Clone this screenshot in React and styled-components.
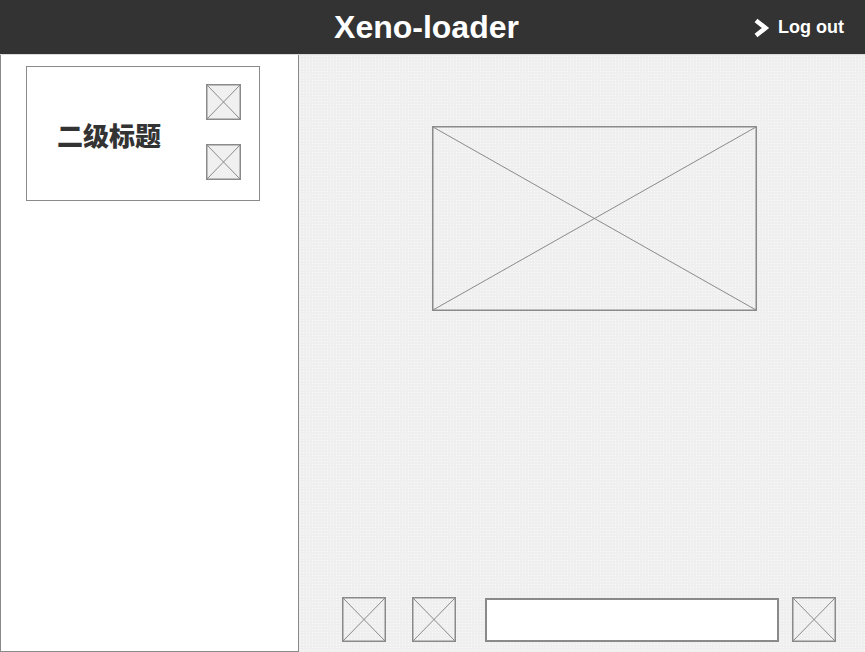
import React from 'react'
import styled, { createGlobalStyle } from 'styled-components'

const GlobalStyle = createGlobalStyle`
    html, body {
        margin: 0;
        padding: 0;
    }
    body {
        font-family: "Liberation Sans", Arial, sans-serif;
        background: #efefef;
    }
`

const Placeholder = ({ width, height, fill = 'none' }) => (
    <svg width={width} height={height} viewBox={`0 0 ${width} ${height}`} style={{ display: 'block' }}>
        <rect x="0.75" y="0.75" width={width - 1.5} height={height - 1.5} fill={fill} stroke="#8a8a8a" strokeWidth="1.5" />
        <line x1="1" y1="1" x2={width - 1} y2={height - 1} stroke="#8a8a8a" strokeWidth="1" />
        <line x1={width - 1} y1="1" x2="1" y2={height - 1} stroke="#8a8a8a" strokeWidth="1" />
    </svg>
)

const App = () => {
    return (
        <Page>
            <GlobalStyle />
            <Header>
                <Title>Xeno-loader</Title>
                <Logout>
                    <svg width="17" height="20" viewBox="0 0 17 20">
                        <path d="M3 2.5 L12.5 10 L3 17.5" fill="none" stroke="#fff" strokeWidth="4.5" strokeLinejoin="miter" />
                    </svg>
                    <span>Log out</span>
                </Logout>
            </Header>
            <Body>
                <Sidebar>
                    <Card>
                        <CardTitle>二级标题</CardTitle>
                        <CardIcons>
                            <Placeholder width={35} height={36} fill="#f0f0f0" />
                            <Placeholder width={35} height={36} fill="#f0f0f0" />
                        </CardIcons>
                    </Card>
                </Sidebar>
                <Main>
                    <Picture>
                        <Placeholder width={325} height={185} />
                    </Picture>
                    <Controls>
                        <Slot $ml={0}><Placeholder width={44} height={45} /></Slot>
                        <Slot $ml={26}><Placeholder width={44} height={45} /></Slot>
                        <Input $ml={29} />
                        <Slot $ml={13}><Placeholder width={44} height={45} /></Slot>
                    </Controls>
                </Main>
            </Body>
        </Page>
    )
}

const Page = styled.div`
    display: flex;
    flex-direction: column;
    height: 652px;
    width: 865px;
    overflow: hidden;
`

const Header = styled.header`
    position: relative;
    height: 54px;
    flex: none;
    background: #333333;
    border-bottom: 1px solid #dcdcdc;
    display: flex;
    align-items: center;
    justify-content: center;
`

const Title = styled.h1`
    margin: 0;
    color: #fff;
    font-size: 32px;
    font-weight: bold;
    transform: translateX(-6px);
`

const Logout = styled.div`
    position: absolute;
    right: 21px;
    top: 17px;
    display: flex;
    align-items: center;
    gap: 8px;
    color: #fff;
    font-size: 18px;
    font-weight: bold;
`

const Body = styled.div`
    flex: 1;
    display: flex;
    min-height: 0;
`

const Sidebar = styled.aside`
    width: 299px;
    flex: none;
    box-sizing: border-box;
    background: #fff;
    border: 1px solid #8a8a8a;
    border-top: none;
    padding: 11px 0 0 25px;
`

const Card = styled.div`
    box-sizing: border-box;
    width: 234px;
    height: 135px;
    border: 1px solid #8a8a8a;
    display: flex;
    align-items: center;
    justify-content: space-between;
    padding: 0 18px 0 30px;
`

const CardTitle = styled.h2`
    margin: 0;
    font-family: "Noto Sans CJK SC", "Liberation Sans", sans-serif;
    font-size: 26px;
    font-weight: 900;
    color: #333;
    transform: translateY(1px);
`

const CardIcons = styled.div`
    display: flex;
    flex-direction: column;
    gap: 24px;
    transform: translateY(-2px);
`

const Main = styled.main`
    flex: 1;
    display: flex;
    flex-direction: column;
    justify-content: space-between;
    padding: 71px 0 10px 0;
    background-color: #efefef;
    background-image: radial-gradient(rgba(255, 255, 255, 0.7) 0.6px, transparent 0.8px);
    background-size: 3px 3px;
`

const Picture = styled.div`
    margin-left: 133px;
`

const Controls = styled.div`
    display: flex;
    align-items: center;
    padding-left: 43px;
`

const Slot = styled.div`
    margin-left: ${p => p.$ml}px;
`

const Input = styled.div`
    margin-left: ${p => p.$ml}px;
    width: 294px;
    height: 44px;
    box-sizing: border-box;
    background: #fff;
    border: 2px solid #8a8a8a;
`

export default App
